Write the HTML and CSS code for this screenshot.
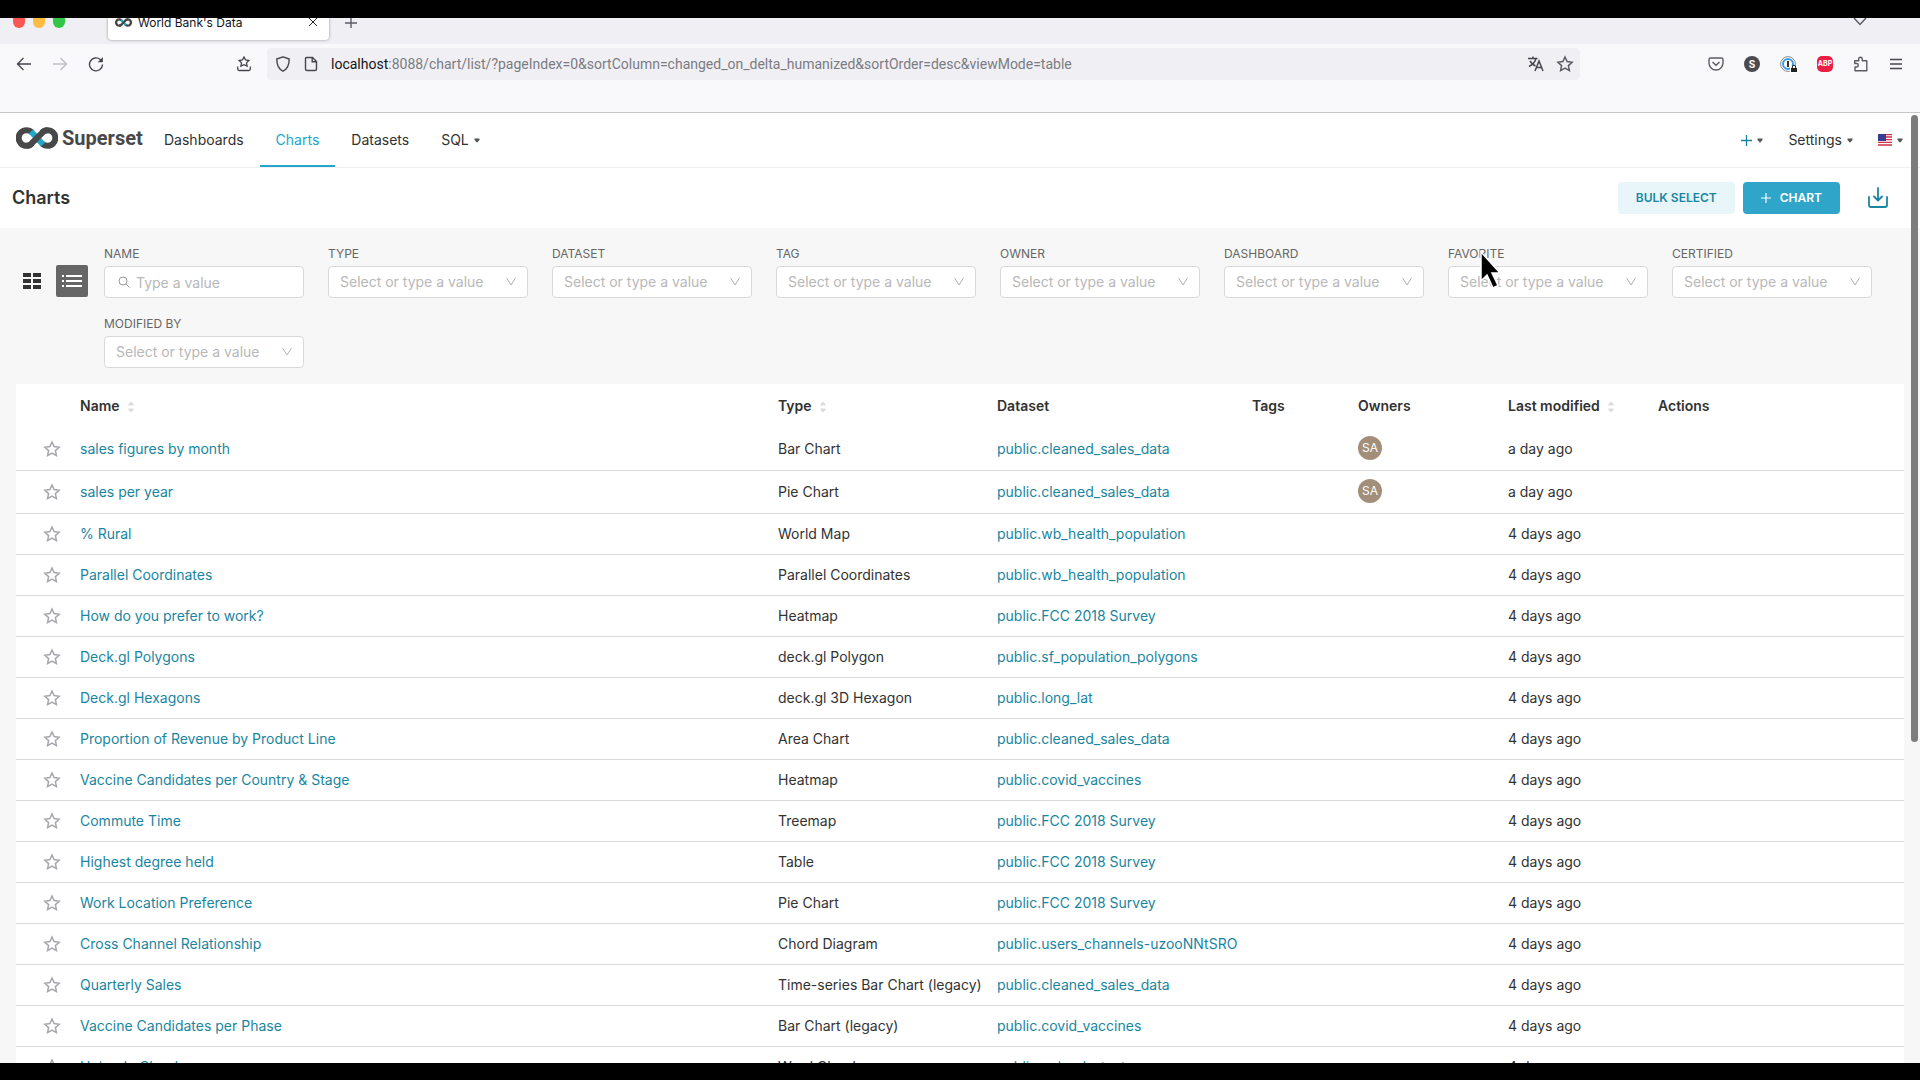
FILE: index.html
```html
<!DOCTYPE html>
<html lang="en">
<head>
    <meta charset="UTF-8">
    <meta name="viewport" content="width=device-width, initial-scale=1.0">
    <title>World Bank's Data</title>
    <link rel="stylesheet" href="styles.css">
</head>
<body>
    <!-- Shared icons -->
    <svg class="sprite" aria-hidden="true">
        <symbol id="logo" viewBox="0 0 42 22">
            <path d="M16 5.500A7.800 7.800 0 1 0 16 16.500M26 5.500A7.800 7.800 0 1 1 26 16.500" fill="none" stroke="#484848" stroke-width="6"/>
            <path d="M15 4.500L27 17.500" fill="none" stroke="#20a7c9" stroke-width="6"/>
            <path d="M10.500 18.800c2.600 0 4.300-1.300 5.700-2.900l9.600-9.800c1.400-1.600 3.100-2.900 5.700-2.900" fill="none" stroke="#484848" stroke-width="6"/>
        </symbol>
        <symbol id="star" viewBox="0 0 18 18">
            <path d="M9 2l2.100 4.600 5 .6-3.700 3.400 1 5L9 13.100l-4.400 2.500 1-5L1.900 7.200l5-.6z" fill="none" stroke="currentColor" stroke-width="1.500"/>
        </symbol>
        <symbol id="plus" viewBox="0 0 12 12">
            <path d="M6 0v12M0 6h12" fill="none" stroke="currentColor" stroke-width="1.400"/>
        </symbol>
        <symbol id="caret" viewBox="0 0 6 5">
            <path d="M.5.5h5v1.500L3 4.800.5 2z" fill="currentColor"/>
        </symbol>
        <symbol id="chevron" viewBox="0 0 12 12">
            <path d="M1.500 2L6 9l4.500-7" fill="none" stroke="currentColor"/>
        </symbol>
        <symbol id="sort" viewBox="0 0 6 12">
            <path d="M.5 4.500V3L3 .5 5.500 3v1.500zM.5 7.500V9L3 11.500 5.500 9V7.500z" fill="currentColor"/>
        </symbol>
    </svg>

    <div class="screen">
        <div class="browser">
            <div class="tab-strip">
                <div class="lights"><i class="red"></i><i class="yellow"></i><i class="green"></i></div>
                <div class="tab">
                    <svg class="favicon"><use href="#logo"/></svg>
                    <span>World Bank's Data</span>
                    <button class="icon-btn" aria-label="Close tab"><svg width="10" height="10" viewBox="0 0 10 10"><path d="M1 0l8 8M9 0L1 8" stroke="#222" fill="none"/></svg></button>
                </div>
                <button class="icon-btn" aria-label="New tab"><svg class="gray" width="12" height="10" viewBox="0 0 12 10"><path d="M6 0v10M0 5h12" fill="none" stroke="currentColor" stroke-width="1.400"/></svg></button>
                <button class="icon-btn all-tabs" aria-label="List all tabs"><svg width="14" height="8" viewBox="0 0 14 8"><path d="M1 0l6 6.500L13 0" stroke="#5b5b66" stroke-width="1.500" fill="none"/></svg></button>
            </div>
            <div class="toolbar">
                <div class="nav-buttons">
                    <button class="icon-btn" aria-label="Back"><svg width="16" height="16" viewBox="0 0 16 16"><path d="M15 8H1.500M7.500 2L1.500 8l6 6" stroke="#45454f" stroke-width="1.300" fill="none"/></svg></button>
                    <button class="icon-btn" aria-label="Forward"><svg width="16" height="16" viewBox="0 0 16 16"><path d="M1 8h13.500M8.500 2l6 6-6 6" stroke="#bdbdc4" stroke-width="1.300" fill="none"/></svg></button>
                    <button class="icon-btn" aria-label="Reload"><svg width="16" height="16" viewBox="0 0 16 16"><path d="M14.500 8.500A6.500 6.500 0 1 1 12.300 3.500L14 5" stroke="#45454f" stroke-width="1.400" fill="none"/><path d="M14.900 1v5.300H9.700z" fill="#45454f"/></svg></button>
                </div>
                <button class="icon-btn" aria-label="Import bookmarks"><svg width="16" height="16" viewBox="0 0 16 16"><path d="M8 1l1.600 3 3.300.5-2.400 2.400.6 3.300L8 8.700l-3.100 1.500.6-3.300L3.100 4.500 6.400 4zM1.700 10.500V13q0 1.500 1.500 1.500h9.600q1.500 0 1.500-1.500v-2.500" stroke="#45454f" stroke-width="1.300" fill="none"/></svg></button>
                <div class="url-bar">
                    <svg width="16" height="16" viewBox="0 0 16 16"><path d="M8 .8L14.200 3C14.300 9 12.500 13 8 15.200 3.500 13 1.700 9 1.800 3z" stroke="#45454f" stroke-width="1.400" fill="none" stroke-linejoin="round"/></svg>
                    <svg width="16" height="16" viewBox="0 0 16 16"><path d="M3.500 1.500h6l4 4V13q0 1.500-1.500 1.500H4Q2.500 14.500 2.500 13V2.500q0-1 1-1zM9.200 1.500v4.300h4.300" stroke="#45454f" stroke-width="1.400" fill="none"/></svg>
                    <span class="url"><b>localhost</b>:8088/chart/list/?pageIndex=0&amp;sortColumn=changed_on_delta_humanized&amp;sortOrder=desc&amp;viewMode=table</span>
                    <button class="icon-btn" aria-label="Translate"><svg width="16" height="16" viewBox="0 0 16 16"><path d="M0 2.500h9.500M5 .5v2M8 2.500C7 6.500 4 9 1 10.500M2 5c1.500 2.500 3 4 5.500 5M7 15l4-10 4 10M8.500 11.500h5" stroke="#45454f" stroke-width="1.500" fill="none"/></svg></button>
                    <button class="icon-btn" aria-label="Bookmark this page"><svg class="gray" width="18" height="18"><use href="#star"/></svg></button>
                </div>
                <div class="extensions">
                    <button class="icon-btn" aria-label="Pocket"><svg width="16" height="16" viewBox="0 0 16 16"><path d="M2.500 2h11q1.500 0 1.500 1.500V7A7 7 0 0 1 1 7V3.500Q1 2 2.500 2zM4.500 6L8 9.300 11.500 6" stroke="#5b5b66" stroke-width="1.400" fill="none"/></svg></button>
                    <button class="icon-btn ext-s" aria-label="Extension">S</button>
                    <button class="icon-btn" aria-label="Password manager"><svg width="17" height="17" viewBox="0 0 17 17"><circle cx="8" cy="8" r="7.400" fill="#fff" stroke="#8a8a90"/><circle cx="8" cy="8" r="5" fill="none" stroke="#3b9cea" stroke-width="2"/><path d="M8 5v6" stroke="#333" stroke-width="2"/><path d="M10 10h7v7h-7z" fill="#fff"/><path d="M11 12h6v4h-6z" fill="#222"/><path d="M12.300 12.500V11a1.700 1.700 0 0 1 3.400 0v1.500" fill="none" stroke="#222"/></svg></button>
                    <button class="icon-btn ext-abp" aria-label="Adblock Plus">ABP</button>
                    <button class="icon-btn" aria-label="Extensions"><svg width="16" height="16" viewBox="0 0 16 16"><path d="M1.700 7V4.800h4V3a1.800 1.800 0 0 1 3.600 0v1.800h4.500v9.900H2V11h1.500a1.700 1.700 0 0 0 0-3.500H1.700z" stroke="#5b5b66" stroke-width="1.400" fill="none" stroke-linejoin="round"/></svg></button>
                    <button class="icon-btn" aria-label="Menu"><svg width="14" height="16" viewBox="0 0 14 16"><path d="M1 3.500h12M1 8h12M1 12.500h12" stroke="#45454f" stroke-width="1.300"/></svg></button>
                </div>
            </div>
        </div>

        <div class="page">
            <header class="navbar">
                <a class="brand" href="#"><svg class="brand-logo"><use href="#logo"/></svg>Superset</a>
                <nav class="menu">
                    <a href="#">Dashboards</a>
                    <a href="#" class="active">Charts</a>
                    <a href="#">Datasets</a>
                    <a href="#">SQL <svg class="caret"><use href="#caret"/></svg></a>
                </nav>
                <div class="menu-right">
                    <a href="#" class="new" aria-label="New"><svg width="11" height="11"><use href="#plus"/></svg><svg class="caret"><use href="#caret"/></svg></a>
                    <a href="#">Settings <svg class="caret"><use href="#caret"/></svg></a>
                    <a href="#" aria-label="Language"><svg width="14" height="12" viewBox="0 0 14 12"><path fill="#fff" d="M0 0h14v12H0z"/><path d="M0 .5h14M0 3h14M0 5.700h14M0 8.300h14M0 11h14" stroke="#d02f44" stroke-width="1.300"/><path fill="#3c3b8e" d="M0 0h8v7H0z"/></svg><svg class="caret"><use href="#caret"/></svg></a>
                </div>
            </header>

            <div class="subheader">
                <h1>Charts</h1>
                <button class="btn btn-light">Bulk select</button>
                <button class="btn btn-primary"><svg width="10" height="10"><use href="#plus"/></svg>Chart</button>
                <button class="icon-btn import" aria-label="Import charts"><svg width="22" height="22" viewBox="0 0 22 22"><path d="M11 1v12M7 9.500l4 4 4-4M2 10v8q0 2 2 2h14q2 0 2-2v-8" stroke="#1a85a0" stroke-width="1.800" fill="none" stroke-linecap="round" stroke-linejoin="round"/></svg></button>
            </div>

            <div class="controls">
                <div class="view-modes">
                    <button class="view-btn" aria-label="Card view"><svg width="18" height="16" viewBox="0 0 18 16"><path d="M0 0h8v4H0zM10 0h8v4h-8zM0 6h8v4H0zM10 6h8v4h-8zM0 12h8v4H0zM10 12h8v4h-8z" fill="#323232"/></svg></button>
                    <button class="view-btn selected" aria-label="List view"><svg width="20" height="12" viewBox="0 0 20 12"><path d="M0 1h2M4 1h16M0 6h2M4 6h16M0 11h2M4 11h16" stroke="#fff" stroke-width="2"/></svg></button>
                </div>
                <div class="filters" id="filters">
                    <div class="filter">
                        <label for="f-name">Name</label>
                        <div class="field">
                            <svg class="search" viewBox="0 0 12 12"><circle cx="5" cy="5" r="4" fill="none" stroke="currentColor"/><path d="M8 8l3.500 3.500" stroke="currentColor"/></svg>
                            <input id="f-name" type="text" placeholder="Type a value">
                        </div>
                    </div>
                </div>
            </div>

            <table class="charts">
                <colgroup>
                    <col class="c-star"><col><col class="c-type"><col class="c-dataset"><col class="c-tags"><col class="c-owners"><col class="c-modified"><col class="c-actions">
                </colgroup>
                <thead>
                    <tr>
                        <th></th>
                        <th>Name <svg class="sort"><use href="#sort"/></svg></th>
                        <th>Type <svg class="sort"><use href="#sort"/></svg></th>
                        <th>Dataset</th>
                        <th>Tags</th>
                        <th>Owners</th>
                        <th>Last modified <svg class="sort"><use href="#sort"/></svg></th>
                        <th>Actions</th>
                    </tr>
                </thead>
                <tbody id="rows"></tbody>
            </table>
            <div class="scroll-thumb"></div>
        </div>
        <svg class="pointer" viewBox="0 0 22 40"><path d="M2 2v29l6-6 6 13 5-2.500-6-12.500h8z" fill="#000" stroke="#fff" stroke-width="1.500"/></svg>
    </div>

    <script>
        var filters = ["Type", "Dataset", "Tag", "Owner", "Dashboard", "Favorite", "Certified", "Modified by"];

        // name, type, dataset, owner, modified
        var charts = [
            ["sales figures by month", "Bar Chart", "public.cleaned_sales_data", "SA", "a day ago"],
            ["sales per year", "Pie Chart", "public.cleaned_sales_data", "SA", "a day ago"],
            ["% Rural", "World Map", "public.wb_health_population", "", "4 days ago"],
            ["Parallel Coordinates", "Parallel Coordinates", "public.wb_health_population", "", "4 days ago"],
            ["How do you prefer to work?", "Heatmap", "public.FCC 2018 Survey", "", "4 days ago"],
            ["Deck.gl Polygons", "deck.gl Polygon", "public.sf_population_polygons", "", "4 days ago"],
            ["Deck.gl Hexagons", "deck.gl 3D Hexagon", "public.long_lat", "", "4 days ago"],
            ["Proportion of Revenue by Product Line", "Area Chart", "public.cleaned_sales_data", "", "4 days ago"],
            ["Vaccine Candidates per Country &amp; Stage", "Heatmap", "public.covid_vaccines", "", "4 days ago"],
            ["Commute Time", "Treemap", "public.FCC 2018 Survey", "", "4 days ago"],
            ["Highest degree held", "Table", "public.FCC 2018 Survey", "", "4 days ago"],
            ["Work Location Preference", "Pie Chart", "public.FCC 2018 Survey", "", "4 days ago"],
            ["Cross Channel Relationship", "Chord Diagram", "public.users_channels-uzooNNtSRO", "", "4 days ago"],
            ["Quarterly Sales", "Time-series Bar Chart (legacy)", "public.cleaned_sales_data", "", "4 days ago"],
            ["Vaccine Candidates per Phase", "Bar Chart (legacy)", "public.covid_vaccines", "", "4 days ago"],
            ["Unicode Cloud", "Word Cloud", "public.unicode_test", "", "4 days ago"]
        ];

        filters.forEach(function(name, i) {
            document.getElementById("filters").insertAdjacentHTML("beforeend", `
                <div class="filter">
                    <label for="f-${i}">${name}</label>
                    <div class="field">
                        <select id="f-${i}"><option>Select or type a value</option></select>
                        <svg class="chevron"><use href="#chevron"/></svg>
                    </div>
                </div>
            `);
        });

        document.getElementById("rows").innerHTML = charts.map(function(c) {
            return `
                <tr>
                    <td><button class="icon-btn fave" aria-label="Favorite"><svg width="18" height="18"><use href="#star"/></svg></button></td>
                    <td><a href="#">${c[0]}</a></td>
                    <td>${c[1]}</td>
                    <td><a href="#">${c[2]}</a></td>
                    <td></td>
                    <td>${c[3] ? `<span class="avatar">${c[3]}</span>` : ""}</td>
                    <td>${c[4]}</td>
                    <td></td>
                </tr>
            `;
        }).join("");
    </script>
</body>
</html>
```

FILE: styles.css
```css
* {
    box-sizing: border-box;
}
body {
    margin: 0;
    background-color: #000;
    color: #323232;
    font-family: Inter, "Liberation Sans", sans-serif;
    font-size: 14px;
    line-height: 20px;
}
a {
    color: #1a85a0;
    text-decoration: none;
}
button,
input,
select {
    font: inherit;
}
svg {
    flex: none;
}
.sprite {
    position: absolute;
    width: 0;
    height: 0;
}
.screen {
    position: relative;
    display: flex;
    flex-direction: column;
    height: 100vh;
    border-top: 18px solid #000;
    border-bottom: 17px solid #000;
    overflow: hidden;
}
.icon-btn {
    display: flex;
    align-items: center;
    justify-content: center;
    padding: 0;
    border: none;
    background: none;
    cursor: pointer;
}
.gray {
    color: #5b5b66;
}

/* Browser window */
.browser {
    flex: none;
    background-color: #f9f9fb;
    border-bottom: 1px solid #c6c6ca;
}
.tab-strip {
    display: flex;
    align-items: flex-start;
    height: 26px;
    padding-left: 13px;
    background-color: #f0f0f4;
}
.lights {
    display: flex;
    gap: 8px;
    width: 95px;
}
.lights i {
    width: 12px;
    height: 10px;
    border-radius: 0 0 6px 6px;
}
.red { background-color: #fc5753; }
.yellow { background-color: #fdbc40; }
.green { background-color: #33c748; }
.tab {
    display: flex;
    align-items: flex-start;
    gap: 6px;
    width: 221px;
    height: 22px;
    margin-right: 16px;
    padding: 0 11px 0 7px;
    border-radius: 0 0 4px 4px;
    background-color: #fff;
    box-shadow: 0 0 3px rgba(0, 0, 0, 0.4);
    color: #15141a;
    font-size: 12px;
    line-height: 10px;
}
.tab .icon-btn {
    margin-left: auto;
}
.favicon {
    width: 17px;
    height: 9px;
}
.all-tabs {
    margin: 0 53px 0 auto;
}
.toolbar {
    display: flex;
    align-items: center;
    height: 68px;
    padding: 4px 17px 32px 16px;
}
.nav-buttons {
    display: flex;
    gap: 20px;
    width: 220px;
}
.url-bar {
    display: flex;
    align-items: center;
    gap: 12px;
    flex: 1;
    height: 32px;
    margin: 0 128px 0 15px;
    padding: 0 6px 0 8px;
    border-radius: 4px;
    background-color: #f0f0f4;
}
.url {
    flex: 1;
    color: #7b7b82;
    font-family: Roboto, sans-serif;
}
.url b {
    color: #15141a;
    font-weight: normal;
}
.extensions {
    display: flex;
    align-items: center;
    gap: 20px;
}
.ext-s,
.ext-abp {
    width: 16px;
    height: 16px;
    border-radius: 8px;
    background-color: #4a4a4f;
    color: #fff;
    font-size: 10px;
    font-weight: bold;
}
.ext-abp {
    border-radius: 5px;
    background-color: #ed1e45;
    font-size: 7px;
}

/* Superset page */
.page {
    position: relative;
    flex: 1;
    min-height: 0;
    overflow: hidden;
    background-color: #f7f7f7;
}
.scroll-thumb {
    position: absolute;
    top: 2px;
    right: 2px;
    width: 7px;
    height: 66%;
    border-radius: 4px;
    background-color: #7d7d7d;
}
.navbar {
    display: flex;
    height: 55px;
    padding: 0 16px;
    border-bottom: 1px solid #f0f0f2;
    background-color: #fff;
}
.brand {
    display: flex;
    align-items: center;
    gap: 4px;
    width: 132px;
    height: 50px;
    color: #484848;
    font-family: Roboto, sans-serif;
    font-size: 20px;
    font-weight: bold;
}
.brand-logo {
    width: 42px;
    height: 22px;
}
.menu,
.menu-right {
    display: flex;
}
.menu a,
.menu-right a {
    display: flex;
    align-items: center;
    gap: 5px;
    height: 54px;
    padding: 2px 16px 0;
    border-bottom: 2px solid transparent;
    color: #323232;
}
.menu .active {
    border-bottom-color: #20a7c9;
    color: #20a7c9;
}
.menu-right {
    margin-left: auto;
}
.menu-right a {
    padding: 2px 1px 0 24px;
}
.menu-right .new {
    color: #1a85a0;
}
.caret {
    width: 6px;
    height: 5px;
    color: #555;
}
.subheader {
    display: flex;
    align-items: center;
    height: 60px;
    padding: 0 31px 0 12px;
    background-color: #fff;
}
h1 {
    margin: 0 auto 0 0;
    font-size: 18px;
    font-weight: 600;
    line-height: 20px;
}
.btn {
    display: flex;
    align-items: center;
    justify-content: center;
    gap: 9px;
    height: 32px;
    margin-right: 8px;
    padding: 0 18px;
    border: none;
    border-radius: 4px;
    font-size: 12px;
    font-weight: 600;
    text-transform: uppercase;
    cursor: pointer;
}
.btn-light {
    background-color: #e9f6f9;
    color: #1a85a0;
}
.btn-primary {
    background-color: #2fa5c9;
    color: #fff;
}
.import {
    margin-left: 19px;
}

/* View toggle and filters */
.controls {
    display: flex;
    padding: 16px 16px;
}
.view-modes {
    display: flex;
    gap: 8px;
    width: 88px;
    padding-top: 21px;
}
.view-btn {
    display: flex;
    align-items: center;
    justify-content: center;
    width: 32px;
    height: 32px;
    padding: 0;
    border: none;
    border-radius: 2px;
    background: none;
}
.view-btn.selected {
    background-color: #666;
}
.filters {
    display: flex;
    flex-wrap: wrap;
    gap: 16px 24px;
    flex: 1;
}
.filter {
    width: 200px;
}
.filter label {
    display: block;
    height: 22px;
    color: #666;
    font-size: 12px;
    text-transform: uppercase;
}
.field {
    position: relative;
}
.field input,
.field select {
    display: block;
    width: 100%;
    height: 32px;
    padding: 0 11px;
    border: 1px solid #d9d9d9;
    border-radius: 4px;
    background-color: #fff;
    color: #b8b8b8;
    appearance: none;
}
.field input {
    padding-left: 31px;
}
.field input::placeholder {
    color: #b8b8b8;
}
.search,
.chevron {
    position: absolute;
    top: 10px;
    width: 12px;
    height: 12px;
    color: #b2b2b2;
}
.search {
    left: 14px;
    color: #999;
}
.chevron {
    right: 11px;
}

/* Chart list */
.charts {
    width: calc(100% - 32px);
    margin: 0 16px;
    border-collapse: separate;
    border-spacing: 0;
    table-layout: fixed;
    background-color: #fff;
}
.c-star { width: 56px; }
.c-type { width: 219px; }
.c-dataset { width: 255px; }
.c-tags { width: 106px; }
.c-owners { width: 150px; }
.c-modified { width: 150px; }
.c-actions { width: 254px; }
th {
    height: 44px;
    padding: 0 8px;
    font-weight: 600;
    text-align: left;
    white-space: nowrap;
}
td {
    height: 41px;
    padding: 0 8px;
    border-bottom: 1px solid #dadadd;
    white-space: nowrap;
}
.sort {
    width: 6px;
    height: 12px;
    margin-left: 5px;
    color: #dcdcdc;
    vertical-align: -2px;
}
.fave {
    margin: 0 auto;
    padding-left: 16px;
    color: #a6a6ac;
}
.avatar {
    display: block;
    width: 24px;
    height: 24px;
    margin: 8px 0 10px;
    border-radius: 12px;
    background-color: #a38f79;
    color: #fff;
    font-size: 12px;
    line-height: 24px;
    text-align: center;
}
.pointer {
    position: absolute;
    top: 232px;
    left: 77%;
    width: 24px;
    height: 40px;
}
```
